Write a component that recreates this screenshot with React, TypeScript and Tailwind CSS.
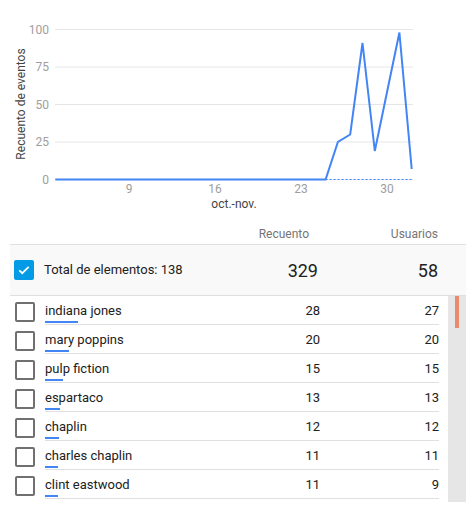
import React from "react";

const rows = [
  { name: "indiana jones", count: 28, users: 27 },
  { name: "mary poppins", count: 20, users: 20 },
  { name: "pulp fiction", count: 15, users: 15 },
  { name: "espartaco", count: 13, users: 13 },
  { name: "chaplin", count: 12, users: 12 },
  { name: "charles chaplin", count: 11, users: 11 },
  { name: "clint eastwood", count: 11, users: 9 },
];

// daily values, Oct 3 .. Nov 1 (day 32)
const series: Record<number, number> = { 26: 25, 27: 30, 28: 91, 29: 19, 30: 58.5, 31: 98, 32: 7 };

const xOf = (d: number) => 129 + (d - 9) * 12.29;
const yOf = (v: number) => 179.5 - v * 1.5;

function Chart() {
  const pts: string[] = [];
  for (let d = 3; d <= 32; d++) {
    if (d > 25 || d === 3 || d === 25) pts.push(`${xOf(d).toFixed(1)},${yOf(series[d] ?? 0).toFixed(1)}`);
  }
  return (
    <svg width={466} height={219} className="block" style={{ fontFamily: "Roboto, sans-serif" }}>
      {[0, 25, 50, 75, 100].map((v) => (
        <g key={v}>
          <line x1={55} x2={413} y1={yOf(v)} y2={yOf(v)} stroke="#e6e6e6" strokeWidth={1} />
          <text x={49} y={yOf(v) + 4.3} textAnchor="end" fontSize={12} fill="#9e9e9e">
            {v}
          </text>
        </g>
      ))}
      <text
        x={0}
        y={0}
        transform="translate(25 104) rotate(-90)"
        textAnchor="middle"
        fontSize={12}
        fill="#444"
      >
        Recuento de eventos
      </text>
      {[9, 16, 23, 30].map((d) => (
        <text key={d} x={xOf(d)} y={193} textAnchor="middle" fontSize={12} fill="#9e9e9e">
          {d}
        </text>
      ))}
      <text x={234} y={208} textAnchor="middle" fontSize={12} fill="#444">
        oct.-nov.
      </text>
      <line
        x1={xOf(25)}
        x2={413}
        y1={yOf(0)}
        y2={yOf(0)}
        stroke="#4285f4"
        strokeWidth={1.2}
        strokeDasharray="2 2"
      />
      <polyline points={pts.join(" ")} fill="none" stroke="#4285f4" strokeWidth={2} strokeLinejoin="miter" />
    </svg>
  );
}

function Check({ on }: { on?: boolean }) {
  if (on) {
    return (
      <div className="flex h-[20px] w-[20px] shrink-0 items-center justify-center rounded-[2px] bg-[#039be5]">
        <svg width="14" height="14" viewBox="0 0 24 24">
          <path d="M4 12.5l5 5L20 6.5" fill="none" stroke="#fff" strokeWidth="3" />
        </svg>
      </div>
    );
  }
  return <div className="h-[20px] w-[20px] shrink-0 rounded-[2px] border-2 border-[#707070]" />;
}

export default function App() {
  return (
    <div className="h-[511px] w-[466px] overflow-hidden bg-white text-[#212121]" style={{ fontFamily: "Roboto, sans-serif" }}>
      <Chart />
      <div className="pl-[10px]">
        <div className="flex h-[26px] items-start justify-end border-b border-[#e0e0e0] pr-[28px] pt-[7px] text-[12px] leading-[16px] text-[#757575]">
          <div className="w-[100px] text-right">Recuento</div>
          <div className="w-[129px] text-right">Usuarios</div>
        </div>
        <div className="flex h-[51px] items-center border-b border-[#e0e0e0] bg-[#f9f9f9] pl-[4px] pr-[28px]">
          <Check on />
          <div className="ml-[10px] flex-1 text-[13px]">Total de elementos: 138</div>
          <div className="w-[100px] text-right text-[18px]">329</div>
          <div className="w-[120px] text-right text-[18px]">58</div>
        </div>
        <div className="flex h-[206px]">
          <div className="flex-1 overflow-hidden">
            {rows.map((r) => (
              <div key={r.name} className="flex items-start pl-[5px]">
                <div className="mt-[6px]">
                  <Check />
                </div>
                <div className="ml-[10px] mr-[9px] flex flex-1 items-start border-b border-[#e0e0e0] pb-[1px] pt-[7px] text-[13px] leading-[16px]">
                  <div className="flex flex-1 flex-col">
                    <span>{r.name}</span>
                    <div className="mt-[2px] h-[2px] bg-[#4285f4]" style={{ width: `${r.count * 1.18}px` }} />
                  </div>
                  <div className="w-[60px] text-right">{r.count}</div>
                  <div className="w-[119px] text-right">{r.users}</div>
                </div>
              </div>
            ))}
          </div>
          <div className="w-[18px] bg-[#e6e6e6] pl-[7px]">
            <div className="h-[32px] w-[4px] bg-[#ec8a6d]" />
          </div>
        </div>
      </div>
    </div>
  );
}
